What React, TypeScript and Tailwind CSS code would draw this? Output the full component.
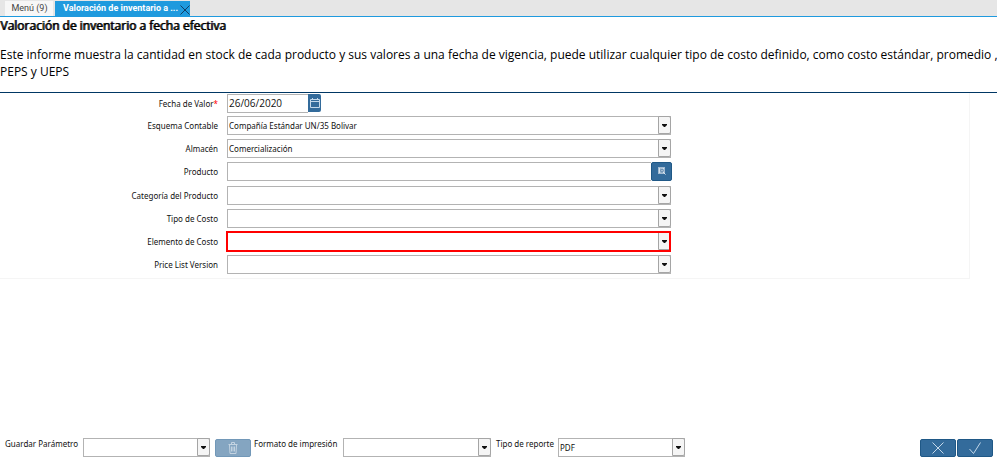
import { useState } from "react";
import type { ReactNode } from "react";

type ComboProps = {
  id: string;
  options?: string[];
  invalid?: boolean;
  className?: string;
};

function Combo({ id, options = [""], invalid = false, className = "" }: ComboProps) {
  return (
    <div className={`relative h-[19px] ${className}`}>
      <select
        id={id}
        defaultValue={options[0]}
        className="block h-full w-full appearance-none border border-[#b3b3b3] bg-white pr-4 pl-px text-[8px] leading-4 text-[#111] outline-none"
      >
        {options.map((option) => (
          <option key={option}>{option}</option>
        ))}
      </select>
      <span className="pointer-events-none absolute top-0 right-0 flex h-[18px] w-[13px] items-center justify-center rounded-r-xs border border-[#a5a5a5] bg-[#f5f5f5]">
        <svg width="5" height="3" viewBox="0 0 5 3" aria-hidden="true">
          <path d="M0 0h5v1L3 3H2L0 1z" fill="#111" />
        </svg>
      </span>
      {invalid && (
        <span className="pointer-events-none absolute -top-px right-0 -bottom-px -left-px border-2 border-[#ff0000]" />
      )}
    </div>
  );
}

function Row({ id, label, required, children }: { id: string; label: string; required?: boolean; children: ReactNode }) {
  return (
    <div className={`grid grid-cols-[227fr_444fr_298fr] ${required ? "h-[22px]" : "h-[23px]"}`}>
      <label htmlFor={id} className="pt-0.5 pr-[9px] text-right text-[8px] leading-4 text-[#111]">
        {label}
        {required && <span className="text-[#f00]">*</span>}
      </label>
      <div>{children}</div>
    </div>
  );
}

export default function App() {
  const [date, setDate] = useState("26/06/2020");
  const [product, setProduct] = useState("");

  return (
    <div className="flex min-h-screen flex-col bg-white font-['Noto_Sans',sans-serif] text-black">
      <nav className="flex h-[17px] items-end gap-0.5 border-b border-[#1f9ade] bg-[#e6e6e6] pl-[5px] font-['Roboto',sans-serif] text-[9px] leading-[15px]">
        <button className="h-[15px] w-12 bg-[#f7f7f7] pl-px text-[#444]">Menú (9)</button>
        <div className="flex h-[15px] w-[135px] items-center justify-between bg-[#1f9ade] pl-2 font-bold text-white">
          <button className="whitespace-nowrap">Valoración de inventario a ...</button>
          <button aria-label="Cerrar" className="pt-0.5">
            <svg width="10" height="10" viewBox="0 0 10 10" fill="none" stroke="#123e63" aria-hidden="true">
              <path d="M.5.5l9 9M9.500.5l-9 9" />
            </svg>
          </button>
        </div>
      </nav>

      <header className="overflow-x-hidden border-b border-[#003764] pb-3 font-['Open_Sans',sans-serif]">
        <h1 className="text-[12px] leading-[17px] font-normal [text-shadow:1px_0_0_#000]">
          Valoración de inventario a fecha efectiva
        </h1>
        <p className="-mr-1 pt-3 text-[12px] leading-[17px]">
          Este informe muestra la cantidad en stock de cada producto y sus valores a una fecha de vigencia, puede utilizar
          cualquier tipo de costo definido, como costo estándar, promedio , PEPS y UEPS
        </p>
      </header>

      <main className="mr-[27px] border-r border-b border-[#f5f5f5] pt-px">
        <Row id="fecha" label="Fecha de Valor" required>
          <div className="flex h-[19px]">
            <input
              id="fecha"
              value={date}
              onChange={(e) => setDate(e.target.value)}
              className="w-[81px] border border-r-0 border-[#b3b3b3] px-px font-['Open_Sans',sans-serif] text-[10px] text-[#111] outline-none"
            />
            <button aria-label="Calendario" className="flex h-[18px] w-[13px] items-center justify-center rounded-r-xs bg-[#336b9b]">
              <svg width="10" height="11" viewBox="0 0 10 11" fill="none" stroke="#c4d8ea" aria-hidden="true">
                <path d="M.5 1.500h9v8h-9zM.5 3.500h9M2.500 0v2M7.500 0v2" />
              </svg>
            </button>
          </div>
        </Row>
        <Row id="esquema" label="Esquema Contable">
          <Combo id="esquema" options={["Compañía Estándar UN/35 Bolivar"]} />
        </Row>
        <Row id="almacen" label="Almacén">
          <Combo id="almacen" options={["Comercialización"]} />
        </Row>
        <Row id="producto" label="Producto">
          <div className="flex h-[19px]">
            <input
              id="producto"
              value={product}
              onChange={(e) => setProduct(e.target.value)}
              className="min-w-0 flex-1 border border-r-0 border-[#b3b3b3] px-0.5 text-[8px] outline-none"
            />
            <button aria-label="Buscar producto" className="-mr-px flex h-[19px] w-[21px] items-center justify-center rounded-xs border border-[#1f5886] bg-[#336b9b]">
              <svg width="8" height="9" viewBox="0 0 8 9" fill="none" aria-hidden="true">
                <path d="M0 0h7v7H0z" fill="#a3bbd1" />
                <path d="M1.500 1v5M3 1.500h3M5.500 2v3" stroke="#d5e2ee" />
                <circle cx="4" cy="3.500" r="1.500" stroke="#6088ad" />
                <path d="M5 5l2.500 2.500" stroke="#dce8f2" />
              </svg>
            </button>
          </div>
        </Row>
        <div className="pt-px">
          <Row id="categoria" label="Categoría del Producto">
            <Combo id="categoria" />
          </Row>
        </div>
        <Row id="tipo" label="Tipo de Costo">
          <Combo id="tipo" />
        </Row>
        <Row id="elemento" label="Elemento de Costo">
          <Combo id="elemento" invalid />
        </Row>
        <Row id="precio" label="Price List Version">
          <Combo id="precio" />
        </Row>
      </main>

      <footer className="mt-auto flex h-5 items-start pl-[5px] text-[8px] leading-3 text-[#111]">
        <label htmlFor="guardar" className="w-[78px] whitespace-nowrap">Guardar Parámetro</label>
        <Combo id="guardar" className="w-[127px]" />
        <button aria-label="Eliminar" className="mt-px ml-[5px] flex h-[18px] w-9 items-center justify-center rounded-xs border border-[#7298b8] bg-[#84a5c1]">
          <svg width="10" height="12" viewBox="0 0 10 12" fill="none" stroke="#c3d3e1" aria-hidden="true">
            <path d="M.5 2.500h9M3.500 2V.5h3V2M1.500 3l.5 8.500h6L8.500 3M3.500 4.500v5M5 4.500v5M6.500 4.500v5" />
          </svg>
        </button>
        <label htmlFor="formato" className="ml-[3px] w-[89px] whitespace-nowrap">Formato de impresión</label>
        <Combo id="formato" className="w-[148px]" />
        <label htmlFor="reporte" className="ml-[5px] w-[62px] whitespace-nowrap">Tipo de reporte</label>
        <Combo id="reporte" options={["PDF"]} className="w-[127px]" />
        <div className="mt-px mr-1 ml-auto flex gap-px">
          <button aria-label="Cancelar" className="flex h-[18px] w-9 items-center justify-center rounded-xs border border-[#1f5886] bg-[#336b9b]">
            <svg width="12" height="12" viewBox="0 0 12 12" fill="none" stroke="#c4d8ea" aria-hidden="true">
              <path d="M.5.500l11 11M11.500.5l-11 11" />
            </svg>
          </button>
          <button aria-label="Aceptar" className="flex h-[18px] w-9 items-center justify-center rounded-xs border border-[#1f5886] bg-[#336b9b]">
            <svg width="12" height="12" viewBox="0 0 12 12" fill="none" stroke="#c4d8ea" aria-hidden="true">
              <path d="M.5 7l4 4.500L11.500.5" />
            </svg>
          </button>
        </div>
      </footer>
    </div>
  );
}
